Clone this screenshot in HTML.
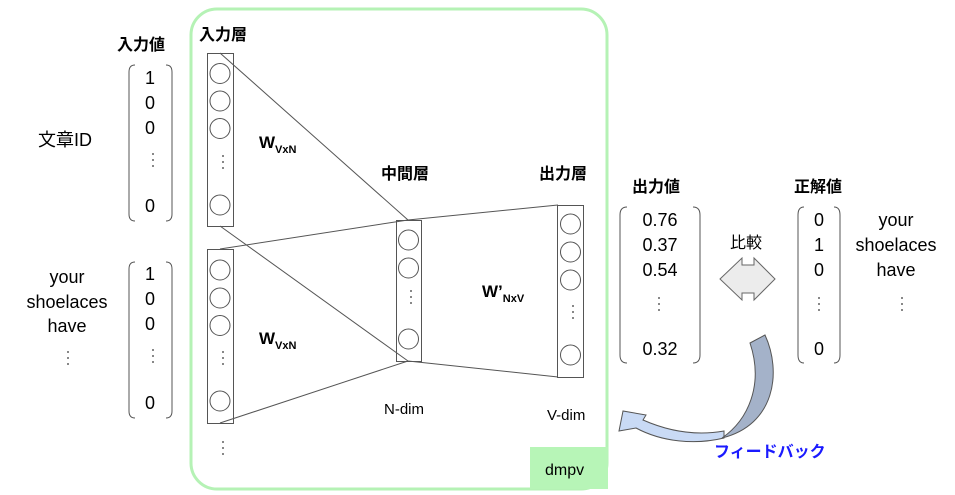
<!DOCTYPE html>
<html><head><meta charset="utf-8"><style>
html,body{margin:0;padding:0;background:#fff;width:955px;height:495px;overflow:hidden}
svg{display:block}
text{font-family:"Liberation Sans","Noto Sans CJK JP",sans-serif;fill:#000}
.b{font-weight:bold}
</style></head><body>
<svg width="955" height="495" viewBox="0 0 955 495" xmlns="http://www.w3.org/2000/svg">
<defs>
<g id="vd"><circle cx="0" cy="-6" r="0.9" fill="#333"/><circle cx="0" cy="0" r="0.9" fill="#333"/><circle cx="0" cy="6" r="0.9" fill="#333"/></g>
</defs>
<rect x="191" y="9" width="416" height="480" rx="26" fill="none" stroke="#b5f2b5" stroke-width="3"/>
<rect x="530" y="447" width="78" height="42" fill="#b7f5b7"/>
<text x="545" y="475" font-size="16">dmpv</text>

<g fill="none" stroke="#555" stroke-width="1">
<line x1="220" y1="53" x2="408" y2="220"/>
<line x1="220" y1="226" x2="408" y2="361"/>
<line x1="220" y1="249" x2="408" y2="220"/>
<line x1="408" y1="220" x2="558" y2="205"/>
<line x1="220" y1="423" x2="408" y2="361"/>
<line x1="408" y1="361" x2="558" y2="377"/>
<rect x="207.5" y="53.5" width="26" height="173"/>
<rect x="207.5" y="249.5" width="26" height="174"/>
<rect x="396.5" y="220.5" width="25" height="141"/>
<rect x="557.5" y="205.5" width="26" height="172"/>
<circle cx="220" cy="73.5" r="10"/><circle cx="220" cy="101" r="10"/><circle cx="220" cy="128.5" r="10"/><circle cx="220" cy="205" r="10"/>
<circle cx="220" cy="270" r="10"/><circle cx="220" cy="298" r="10"/><circle cx="220" cy="325.5" r="10"/><circle cx="220" cy="401" r="10"/>
<circle cx="408.5" cy="240" r="10"/><circle cx="408.5" cy="268" r="10"/><circle cx="408.5" cy="339" r="10"/>
<circle cx="570.5" cy="224" r="10"/><circle cx="570.5" cy="252" r="10"/><circle cx="570.5" cy="280" r="10"/><circle cx="570.5" cy="355" r="10"/>
</g>
<use href="#vd" x="223" y="162"/><use href="#vd" x="223" y="358"/><use href="#vd" x="223" y="448"/>
<use href="#vd" x="411" y="297"/><use href="#vd" x="573" y="312"/>

<text x="199" y="40" font-size="16" class="b">入力層</text>
<text x="381" y="179" font-size="16" class="b">中間層</text>
<text x="539" y="179" font-size="16" class="b">出力層</text>
<text x="259" y="148" font-size="17" class="b">W<tspan font-size="11" dy="5">VxN</tspan></text>
<text x="259" y="344" font-size="17" class="b">W<tspan font-size="11" dy="5">VxN</tspan></text>
<text x="482" y="297" font-size="17" class="b">W’<tspan font-size="11" dy="5">NxV</tspan></text>
<text x="384" y="414" font-size="15">N-dim</text>
<text x="547" y="420" font-size="15">V-dim</text>

<text x="117" y="50" font-size="16" class="b">入力値</text>
<text x="38" y="146" font-size="18">文章ID</text>
<g fill="none" stroke="#555" stroke-width="1">
<path d="M135,65 Q129,65 129,72 V214 Q129,221 135,221"/><path d="M166,65 Q172,65 172,72 V214 Q172,221 166,221"/>
<path d="M135,262 Q129,262 129,269 V411 Q129,418 135,418"/><path d="M166,262 Q172,262 172,269 V411 Q172,418 166,418"/>
<path d="M627,207 Q620,207 620,215 V355 Q620,363 627,363"/><path d="M693,207 Q700,207 700,215 V355 Q700,363 693,363"/>
<path d="M804,207 Q798,207 798,215 V355 Q798,363 804,363"/><path d="M834,207 Q840,207 840,215 V355 Q840,363 834,363"/>
</g>
<g font-size="18" text-anchor="middle">
<text x="150" y="84">1</text><text x="150" y="109">0</text><text x="150" y="134">0</text><text x="150" y="212">0</text>
<text x="150" y="280">1</text><text x="150" y="305">0</text><text x="150" y="330">0</text><text x="150" y="409">0</text>
<text x="67" y="283">your</text><text x="67" y="308">shoelaces</text><text x="67" y="332">have</text>
<text x="660" y="226">0.76</text><text x="660" y="251">0.37</text><text x="660" y="276">0.54</text><text x="660" y="355">0.32</text>
<text x="819" y="226">0</text><text x="819" y="251">1</text><text x="819" y="276">0</text><text x="819" y="355">0</text>
<text x="896" y="226">your</text><text x="896" y="251">shoelaces</text><text x="896" y="276">have</text>
</g>
<use href="#vd" x="153" y="160"/><use href="#vd" x="153" y="356"/><use href="#vd" x="68" y="358"/>
<use href="#vd" x="659" y="304"/><use href="#vd" x="819" y="304"/><use href="#vd" x="902" y="304"/>

<text x="632" y="192" font-size="16" class="b">出力値</text>
<text x="794" y="192" font-size="16" class="b">正解値</text>
<text x="730" y="248" font-size="16">比較</text>
<polygon points="720,279 742,258 742,265 754,265 754,258 775,279 754,300 754,293 742,293 742,300" fill="#ececec" stroke="#666" stroke-width="1"/>
<path d="M724,431 C696,436 668,431 643,420 L646,415 L623,411 L619,431 L636,428 C662,442 695,445 724,438 Z" fill="#c9daf5" stroke="#555" stroke-width="1"/>
<path d="M750,343 L765,335 C782,372 775,425 722,438 C748,420 764,385 750,343 Z" fill="#a4b2c9" stroke="#555" stroke-width="1"/>
<text x="714" y="457" font-size="16" class="b" style="fill:#1a1aff">フィードバック</text>
</svg>
</body></html>
